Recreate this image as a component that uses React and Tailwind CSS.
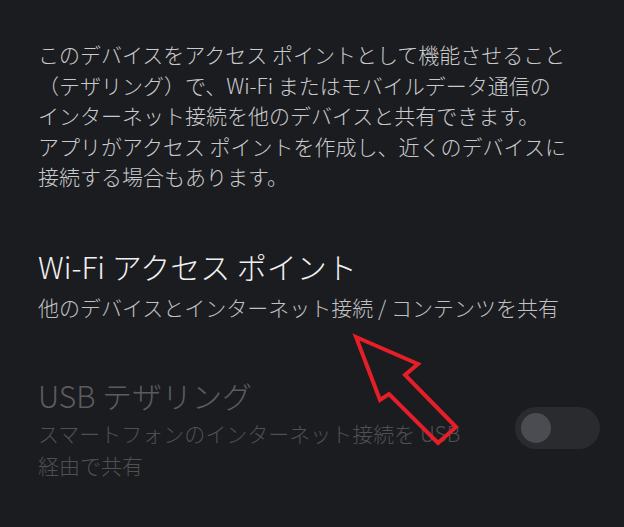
import React from 'react';

const Toggle = () => (
  <div className="w-[85px] h-[42px] rounded-full bg-[#2a2b2e] flex items-center pl-[6px] shrink-0">
    <div className="w-[30px] h-[30px] rounded-full bg-[#4b4c51]" />
  </div>
);

export default function App() {
  return (
    <div className="relative w-[624px] h-[527px] overflow-hidden bg-[#1b1c1f] font-light font-['Noto_Sans_CJK_JP',sans-serif]">
      <div className="pl-[38px] pr-[24px] pt-[39px]">
        {/* intro text */}
        <p className="text-[21px] leading-[30.5px] text-[#c9cacd]">
          このデバイスをアクセス ポイントとして機能させること<br />
          （テザリング）で、Wi-Fi またはモバイルデータ通信の<br />
          インターネット接続を他のデバイスと共有できます。<br />
          アプリがアクセス ポイントを作成し、近くのデバイスに<br />
          接続する場合もあります。
        </p>

        {/* Wi-Fi hotspot */}
        <div className="mt-[54px]">
          <div className="text-[30px] leading-[40px] text-[#f0f0f2]">Wi-Fi アクセス ポイント</div>
          <div className="mt-[6px] text-[21px] leading-[30px] text-[#c0c1c5]">
            他のデバイスとインターネット接続 / コンテンツを共有
          </div>
        </div>

        {/* USB tethering (disabled) */}
        <div className="mt-[53px] flex items-center justify-between">
          <div>
            <div className="text-[30px] leading-[40px] text-[#5b5c60]">USB テザリング</div>
            <div className="mt-[2px] text-[21px] leading-[32px] text-[#4f5054]">
              スマートフォンのインターネット接続を USB<br />
              経由で共有
            </div>
          </div>
          <Toggle />
        </div>
      </div>

      {/* red annotation arrow */}
      <svg className="absolute left-0 top-0 pointer-events-none" width="624" height="527" viewBox="0 0 624 527">
        <polygon
          points="356,337 418,364 405,375 456,427 438,443 389,394 380,400"
          fill="none"
          stroke="#e61e28"
          strokeWidth="4"
          strokeLinejoin="miter"
        />
      </svg>
    </div>
  );
}
